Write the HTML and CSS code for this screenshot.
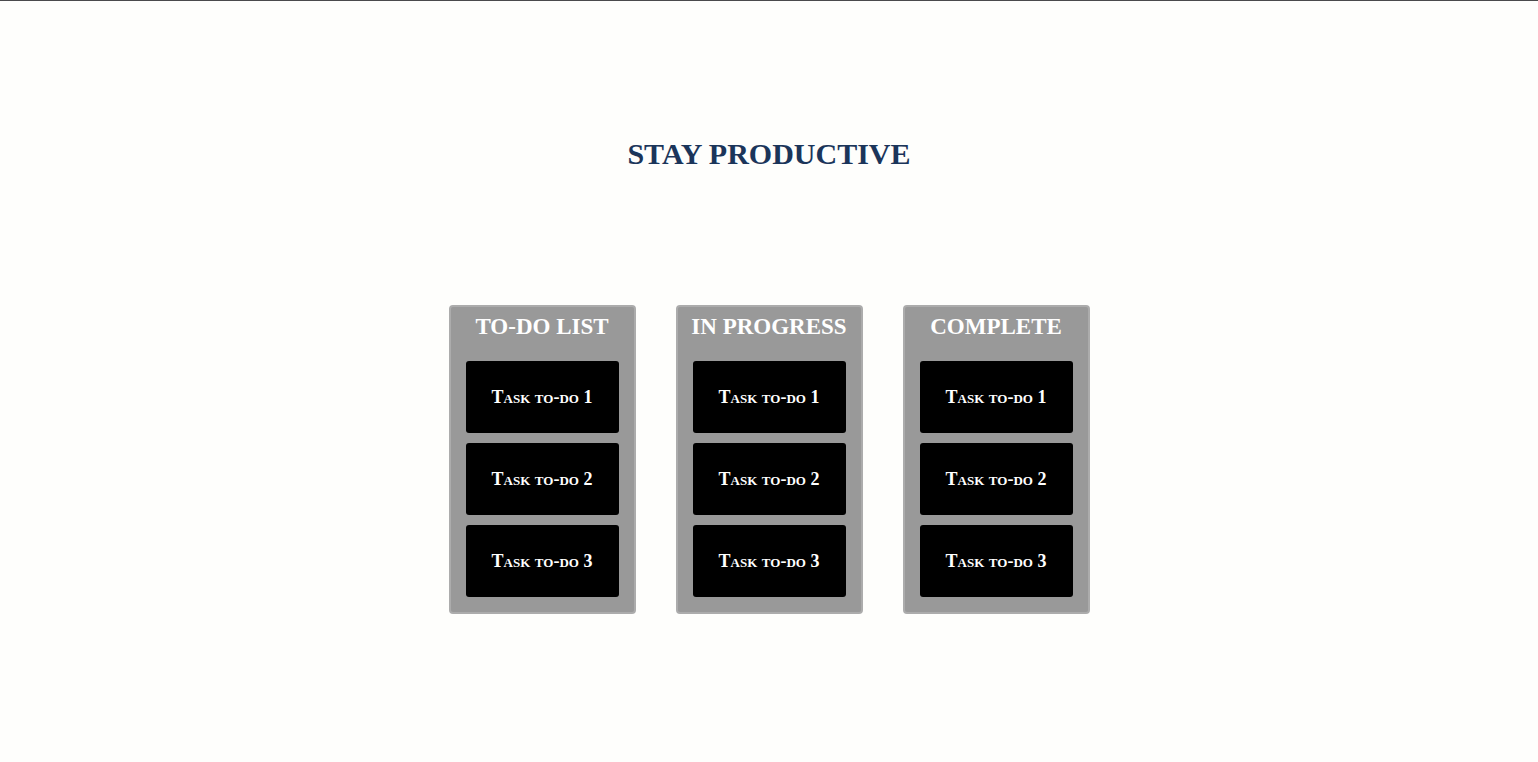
FILE: index.html
```html
<!DOCTYPE html>
<html lang="en">
<head>
  <meta charset="UTF-8" />
  <title>Stay Productive</title>
  <link rel="stylesheet" href="styles.css">
</head>
<body>

<h1 class="title">STAY PRODUCTIVE</h1>

<div class="board">
  <div class="column">
    <h2>TO-DO LIST</h2>
    <div class="task">Task to-do 1</div>
    <div class="task">Task to-do 2</div>
    <div class="task">Task to-do 3</div>
  </div>
  <div class="column">
    <h2>IN PROGRESS</h2>
    <div class="task">Task to-do 1</div>
    <div class="task">Task to-do 2</div>
    <div class="task">Task to-do 3</div>
  </div>
  <div class="column">
    <h2>COMPLETE</h2>
    <div class="task">Task to-do 1</div>
    <div class="task">Task to-do 2</div>
    <div class="task">Task to-do 3</div>
  </div>
</div>

</body>
</html>
```

FILE: styles.css
```css
html, body {
  margin: 0; padding: 0;
  font-family: 'Liberation Serif', 'DejaVu Serif', serif;
  background: #fefefc;
  height: 100%;
}

body {
  border-top: 1px solid #4a4a4c;
}

.title {
  margin: 135px 0 0 0;
  text-align: center;
  font-size: 30px;
  line-height: 36px;
  font-weight: 700;
  color: #1b355a;
}

.board {
  display: flex;
  justify-content: center;
  gap: 40px;
  margin-top: 133px;
}

.column {
  box-sizing: border-box;
  width: 187px;
  padding: 0 15px 15px 15px;
  background: #999999;
  border: 2px solid #acacac;
  border-radius: 4px;
  display: flex;
  flex-direction: column;
  gap: 10px;
}

.column h2 {
  margin: 0 -15px 4px -15px;
  text-align: center;
  white-space: nowrap;
  font-size: 23px;
  line-height: 40px;
  font-weight: 700;
  color: #ffffff;
}

.task {
  height: 72px;
  background: #000000;
  border-radius: 3px;
  color: #ffffff;
  font-size: 18px;
  font-weight: 700;
  font-variant: small-caps;
  display: flex;
  align-items: center;
  justify-content: center;
}
```
